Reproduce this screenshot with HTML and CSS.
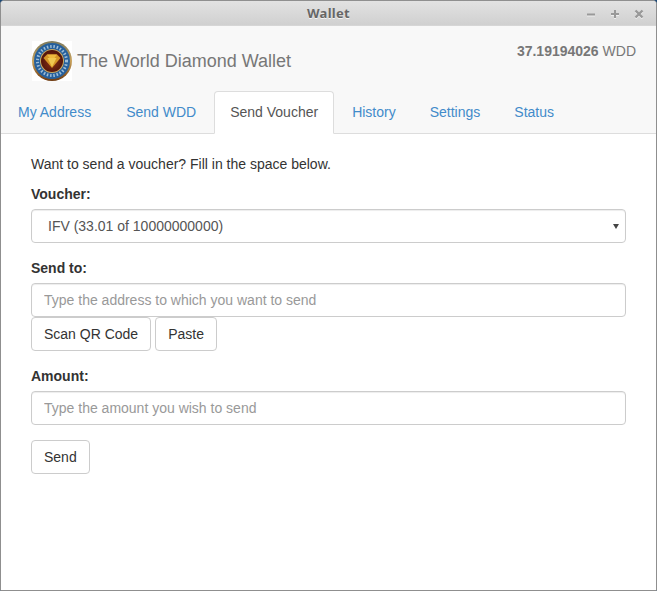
FILE: index.html
```html
<!DOCTYPE html>
<html lang="en">

<head>
    <meta charset="UTF-8">
    <title>Wallet</title>
    <link rel="stylesheet" href="styles.css">
</head>

<body>
    <div class="window">
        <div class="titlebar">
            <span class="titlebar-name">Wallet</span>
            <div class="titlebar-btns">
                <svg width="10" height="10" viewBox="0 0 10 10"><path d="M1 5.5h8" stroke="#999" stroke-width="2" /></svg>
                <svg width="10" height="10" viewBox="0 0 10 10"><path d="M1 5h8M5 1v8" stroke="#999" stroke-width="2" /></svg>
                <svg width="10" height="10" viewBox="0 0 10 10"><path d="M1.5 1.5l7 7M8.5 1.5l-7 7" stroke="#999" stroke-width="2.4" /></svg>
            </div>
        </div>
        <div class="header">
            <div class="brand">
                <svg class="logo" width="40" height="40" viewBox="0 0 40 40">
                    <defs>
                        <linearGradient id="rim" x1="0" y1="0" x2="0" y2="1">
                            <stop offset="0" stop-color="#7d7a5c" />
                            <stop offset="0.5" stop-color="#c9a25c" />
                            <stop offset="1" stop-color="#6e3a10" />
                        </linearGradient>
                        <radialGradient id="core" cx="0.5" cy="0.55" r="0.55">
                            <stop offset="0" stop-color="#8a3214" />
                            <stop offset="1" stop-color="#4e120a" />
                        </radialGradient>
                    </defs>
                    <rect width="40" height="40" fill="#fff" />
                    <circle cx="20" cy="20" r="20" fill="url(#rim)" />
                    <circle cx="20" cy="20" r="18" fill="#26609c" />
                    <circle cx="20" cy="20" r="14.500" fill="none" stroke="#9fbdd6" stroke-width="3" stroke-dasharray="1.500 1.800" />
                    <circle cx="20" cy="20" r="12" fill="#c9a860" />
                    <circle cx="20" cy="20" r="11" fill="url(#core)" />
                    <path d="M11.500 17l3.500-3.500h10l3.500 3.500-8.500 10z" fill="#d69526" />
                    <path d="M15.500 17h9l-4.500 9z" fill="#f0c850" />
                    <path d="M15 13.500l2.500 3.500h5l2.500-3.500z" fill="#eeb93e" />
                </svg>
                <span class="brand-name">The World Diamond Wallet</span>
            </div>
            <div class="balance"><b>37.19194026</b> WDD</div>
        </div>
        <ul class="tabs">
            <li class="first"><a href="#">My Address</a></li>
            <li><a href="#">Send WDD</a></li>
            <li class="current"><a href="#">Send Voucher</a></li>
            <li><a href="#">History</a></li>
            <li><a href="#">Settings</a></li>
            <li><a href="#">Status</a></li>
        </ul>
        <div class="content">
            <p class="intro">Want to send a voucher? Fill in the space below.</p>
            <div class="group">
                <label class="label">Voucher:</label>
                <div class="select-box">
                    <select class="field field-select">
                        <option>IFV (33.01 of 10000000000)</option>
                    </select>
                    <svg class="select-arrow" width="6" height="5" viewBox="0 0 6 5"><path d="M0 0h6L3 5z" fill="#444" /></svg>
                </div>
            </div>
            <div class="group">
                <label class="label">Send to:</label>
                <input class="field" type="text" placeholder="Type the address to which you want to send">
                <div class="btn-row">
                    <button class="btn">Scan QR Code</button>
                    <button class="btn">Paste</button>
                </div>
            </div>
            <div class="group">
                <label class="label">Amount:</label>
                <input class="field" type="text" placeholder="Type the amount you wish to send">
            </div>
            <button class="btn">Send</button>
        </div>
    </div>
</body>

</html>
```

FILE: styles.css
```css
* {
    box-sizing: border-box;
    margin: 0;
    padding: 0;
    list-style: none;
}

html,
body {
    height: 591px;
    overflow: hidden;
}

body {
    background: #1c4a78;
    font-family: "Liberation Sans", Arial, sans-serif;
    font-size: 14px;
    line-height: 20px;
    color: #333;
}

.window {
    display: flex;
    flex-direction: column;
    height: 591px;
    background: #fff;
    border: 1px solid #8f8f8f;
    border-radius: 4px 4px 0 0;
    overflow: hidden;
}

.titlebar {
    position: relative;
    display: flex;
    justify-content: center;
    align-items: center;
    flex: none;
    height: 25px;
    background: linear-gradient(#e2e2e2, #d0d0d0);
    border-bottom: 1px solid #d6d6d6;
}

.titlebar-name {
    font-family: "Noto Sans", sans-serif;
    font-size: 13px;
    font-weight: bold;
    letter-spacing: 0.3px;
    color: #666;
    text-shadow: 0 1px 0 #f4f4f4;
}

.titlebar-btns {
    position: absolute;
    right: 12px;
    top: 8px;
    display: flex;
    gap: 14px;
}

.titlebar-btns svg {
    display: block;
    filter: drop-shadow(0 1px 0 #eee);
}

.header {
    display: flex;
    justify-content: space-between;
    flex: none;
    height: 65px;
    padding: 15px 20px 0 31px;
    background: #f8f8f8;
}

.brand {
    display: flex;
    align-items: center;
    gap: 5px;
    height: 40px;
}

.logo {
    display: block;
}

.brand-name {
    font-size: 18px;
    color: #777;
}

.balance {
    color: #777;
}

.tabs {
    display: flex;
    flex: none;
    height: 43px;
    padding-left: 1px;
    background: #f8f8f8;
    border-bottom: 1px solid #ddd;
}

.tabs li {
    margin-right: 2px;
}

.tabs .first {
    margin-right: 3px;
}

.tabs a {
    display: block;
    height: 42px;
    padding: 10px 15px;
    border: 1px solid transparent;
    border-radius: 4px 4px 0 0;
    color: #428bca;
    text-decoration: none;
}

.tabs .current a {
    height: 43px;
    background: #fff;
    border-color: #ddd #ddd #fff;
    color: #555;
}

.content {
    flex: 1;
    padding: 20px 30px 0;
}

.intro {
    margin-bottom: 10px;
}

.group {
    margin-bottom: 15px;
}

.label {
    display: block;
    margin-bottom: 5px;
    font-weight: bold;
}

.select-box {
    position: relative;
}

.select-arrow {
    position: absolute;
    right: 7px;
    top: 15px;
}

.field {
    display: block;
    width: 100%;
    height: 34px;
    padding: 6px 12px;
    background: #fff;
    border: 1px solid #ccc;
    border-radius: 4px;
    box-shadow: inset 0 1px 1px rgba(0, 0, 0, 0.075);
    font-family: inherit;
    font-size: 14px;
    color: #555;
}

.field::placeholder {
    color: #999;
}

.field-select {
    appearance: none;
    padding-left: 16px;
}

.btn-row {
    display: flex;
    gap: 4px;
}

.btn {
    display: block;
    height: 34px;
    padding: 6px 12px;
    background: #fff;
    border: 1px solid #ccc;
    border-radius: 4px;
    font-family: inherit;
    font-size: 14px;
    color: #333;
}
```
